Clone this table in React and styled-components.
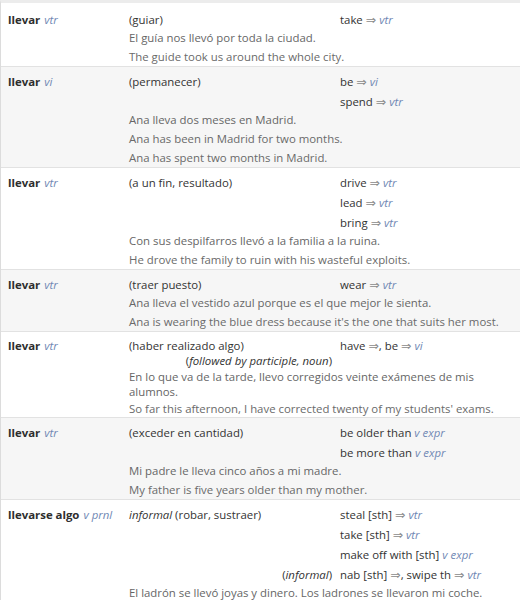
import styled, { createGlobalStyle } from "styled-components";

const GlobalStyle = createGlobalStyle`
  body {
    margin: 0;
    background: #ffffff;
    font-family: "Open Sans", "Noto Sans", sans-serif;
    font-size: 11.4px;
    color: #333;
  }
`;

// Dictionary table, one entry per sense
const Table = styled.div`
  border-left: 1px solid #dcdcdc;
  border-top: 3px solid #ececec;
`;

// One sense row: headword | sense | translations, examples underneath
const Entry = styled.div`
  display: grid;
  grid-template-columns: 121px 211px 1fr;
  padding: ${(props) => (props.compact ? "5px" : "6px")} 0 0 7px;
  background: ${(props) => (props.shaded ? "#f6f6f6" : "#ffffff")};
  border-bottom: 1px solid #e2e2e2;

  &:first-child {
    padding-top: 8px;
  }
`;

const Headword = styled.div`
  grid-column: 1;
  grid-row: 1 / span ${(props) => props.span || 1};
  line-height: 17px;
  white-space: nowrap;

  b {
    font-weight: 700;
    color: #2e2e2e;
  }
`;

const Pos = styled.i`
  color: #7088b4;
  font-weight: 400;
  margin-left: ${(props) => (props.tight ? "0" : "4px")};
`;

const Sense = styled.div`
  grid-column: 2;
  line-height: 17px;
  padding-right: 8px;
  color: #333;
`;

// Right-aligned parenthetical note in the sense column
const Note = styled.div`
  grid-column: 2;
  grid-row: ${(props) => props.row || "auto"};
  display: block;
  text-align: right;
  line-height: ${(props) => (props.inside ? "13px" : "17px")};
  padding-top: ${(props) => (props.inside ? "0" : "3px")};
  margin-bottom: ${(props) => (props.inside ? "1px" : "0")};
  padding-right: ${(props) => (props.inside ? "0" : "8px")};
  color: #333;
`;

// Translation line; lines after the first sit 3px lower
const Translation = styled.div`
  grid-column: 3;
  grid-row: ${(props) => props.row || "auto"};
  line-height: 17px;
  padding-top: ${(props) => (props.extra ? "3px" : "0")};
  color: #333;
  white-space: nowrap;
`;

const Arrow = styled.span`
  font-family: "DejaVu Sans", sans-serif;
  font-size: 12.5px;
  line-height: 0;
  color: #8a8a8a;
`;

const Example = styled.div`
  grid-column: 2 / 4;
  line-height: 15px;
  padding: ${(props) => (props.compact ? "1px" : "2px")} 4px
    ${(props) => (props.compact ? "1px" : "2px")} 0;
  color: ${(props) => (props.en ? "#6a6a6a" : "#666")};
`;

const Tr = ({ word, pos }) => (
  <>
    {word} <Arrow>⇒</Arrow> <Pos tight>{pos}</Pos>
  </>
);

const App = () => (
  <>
    <GlobalStyle />
    <Table>
      <Entry>
        <Headword>
          <b>llevar</b>
          <Pos>vtr</Pos>
        </Headword>
        <Sense>(guiar)</Sense>
        <Translation>
          <Tr word="take" pos="vtr" />
        </Translation>
        <Example>El guía nos llevó por toda la ciudad.</Example>
        <Example en>The guide took us around the whole city.</Example>
      </Entry>

      <Entry shaded>
        <Headword span={2}>
          <b>llevar</b>
          <Pos>vi</Pos>
        </Headword>
        <Sense>(permanecer)</Sense>
        <Translation>
          <Tr word="be" pos="vi" />
        </Translation>
        <Translation extra>
          <Tr word="spend" pos="vtr" />
        </Translation>
        <Example>Ana lleva dos meses en Madrid.</Example>
        <Example en>Ana has been in Madrid for two months.</Example>
        <Example en>Ana has spent two months in Madrid.</Example>
      </Entry>

      <Entry>
        <Headword span={3}>
          <b>llevar</b>
          <Pos>vtr</Pos>
        </Headword>
        <Sense>(a un fin, resultado)</Sense>
        <Translation>
          <Tr word="drive" pos="vtr" />
        </Translation>
        <Translation extra>
          <Tr word="lead" pos="vtr" />
        </Translation>
        <Translation extra>
          <Tr word="bring" pos="vtr" />
        </Translation>
        <Example>Con sus despilfarros llevó a la familia a la ruina.</Example>
        <Example en>He drove the family to ruin with his wasteful exploits.</Example>
      </Entry>

      <Entry shaded>
        <Headword>
          <b>llevar</b>
          <Pos>vtr</Pos>
        </Headword>
        <Sense>(traer puesto)</Sense>
        <Translation>
          <Tr word="wear" pos="vtr" />
        </Translation>
        <Example>Ana lleva el vestido azul porque es el que mejor le sienta.</Example>
        <Example en>
          Ana is wearing the blue dress because it's the one that suits her most.
        </Example>
      </Entry>

      <Entry compact>
        <Headword>
          <b>llevar</b>
          <Pos>vtr</Pos>
        </Headword>
        <Sense>
          (haber realizado algo)
          <Note as="span" inside>
            (<i>followed by participle, noun</i>)
          </Note>
        </Sense>
        <Translation>
          have <Arrow>⇒</Arrow>, be <Arrow>⇒</Arrow> <Pos tight>vi</Pos>
        </Translation>
        <Example compact>
          En lo que va de la tarde, llevo corregidos veinte exámenes de mis alumnos.
        </Example>
        <Example compact en>
          So far this afternoon, I have corrected twenty of my students' exams.
        </Example>
      </Entry>

      <Entry shaded>
        <Headword span={2}>
          <b>llevar</b>
          <Pos>vtr</Pos>
        </Headword>
        <Sense>(exceder en cantidad)</Sense>
        <Translation>
          be older than <Pos tight>v expr</Pos>
        </Translation>
        <Translation extra>
          be more than <Pos tight>v expr</Pos>
        </Translation>
        <Example>Mi padre le lleva cinco años a mi madre.</Example>
        <Example en>My father is five years older than my mother.</Example>
      </Entry>

      <Entry>
        <Headword span={4}>
          <b>llevarse algo</b>
          <Pos>v prnl</Pos>
        </Headword>
        <Sense>
          <i>informal</i> (robar, sustraer)
        </Sense>
        <Translation row={1}>
          <Tr word="steal [sth]" pos="vtr" />
        </Translation>
        <Translation row={2} extra>
          <Tr word="take [sth]" pos="vtr" />
        </Translation>
        <Translation row={3} extra>
          make off with [sth] <Pos tight>v expr</Pos>
        </Translation>
        <Note row={4}>
          (<i>informal</i>)
        </Note>
        <Translation row={4} extra>
          nab [sth] <Arrow>⇒</Arrow>, swipe th <Arrow>⇒</Arrow> <Pos tight>vtr</Pos>
        </Translation>
        <Example>El ladrón se llevó joyas y dinero. Los ladrones se llevaron mi coche.</Example>
      </Entry>
    </Table>
  </>
);

export default App;
